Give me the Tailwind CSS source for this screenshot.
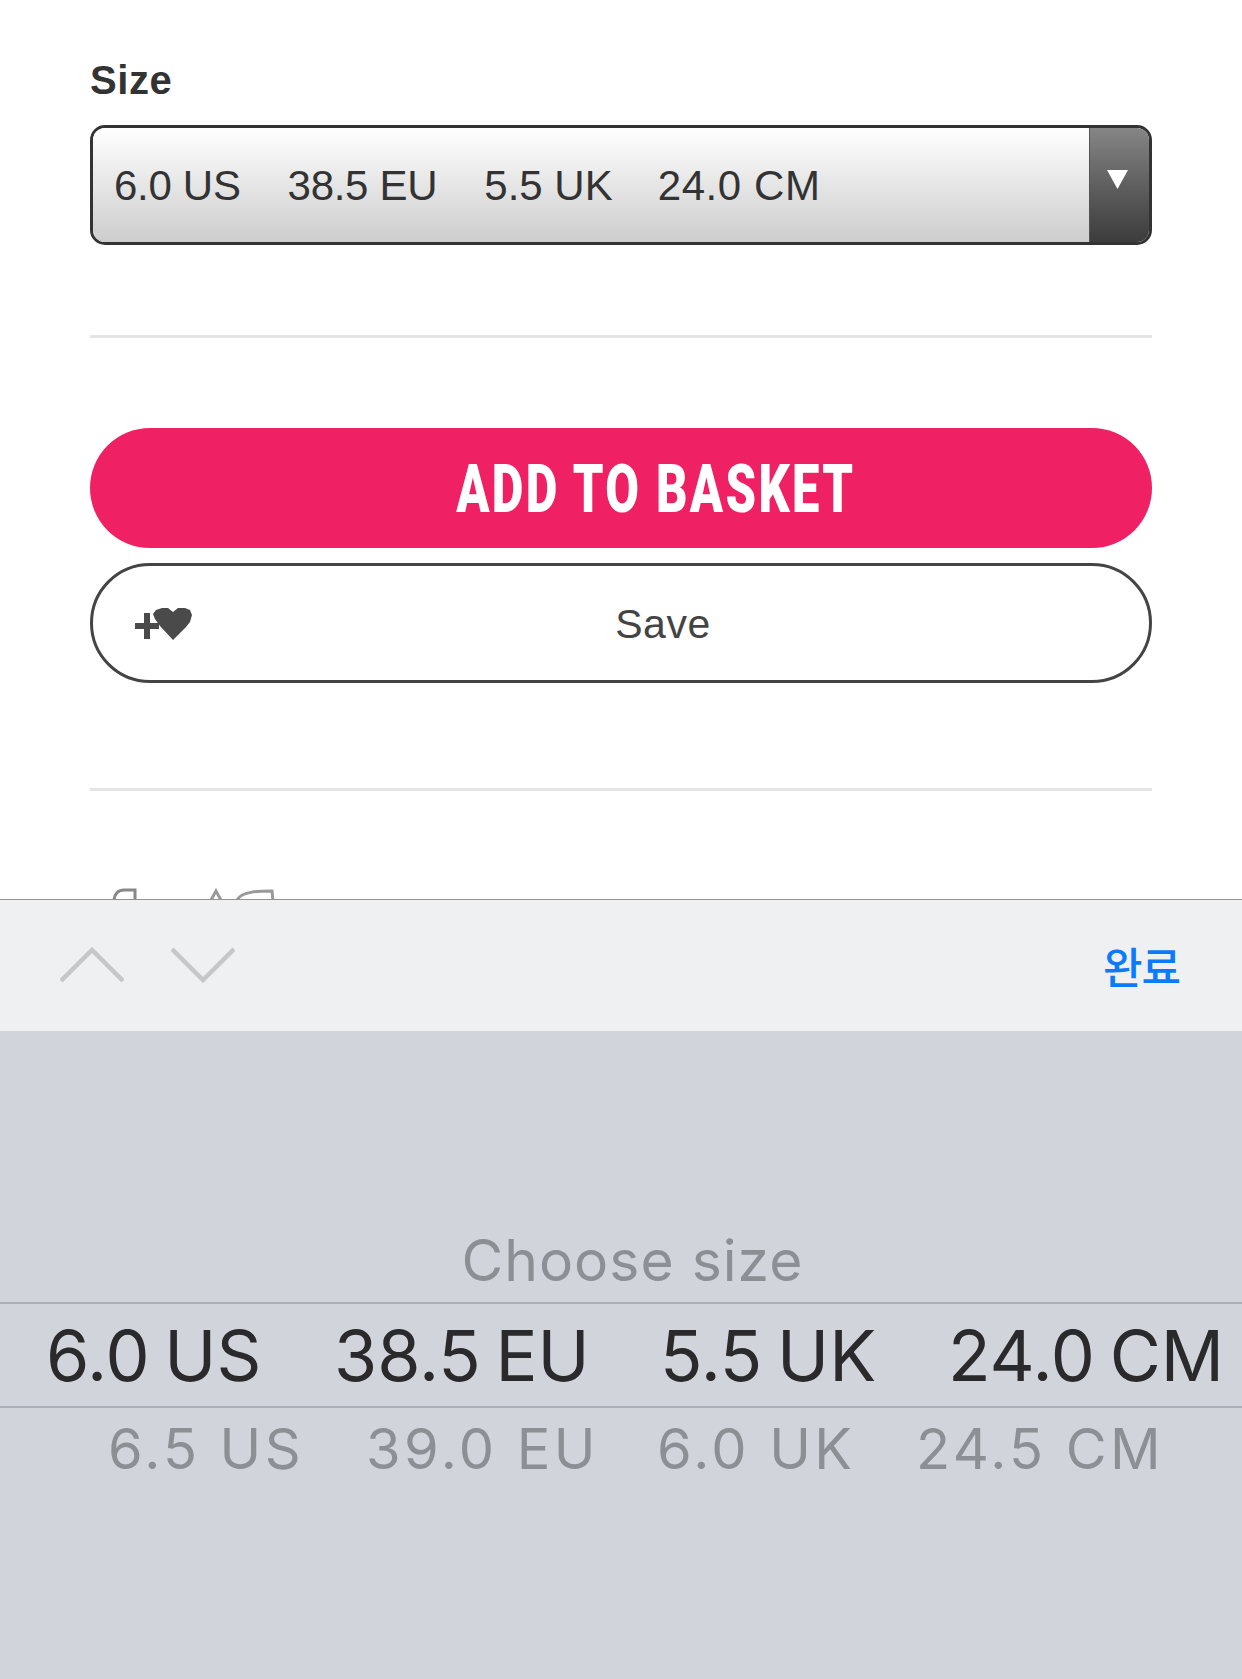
<!DOCTYPE html>
<html><head><meta charset="utf-8"><script src="https://cdn.jsdelivr.net/npm/@tailwindcss/browser@4"></script></head>
<body class="bg-white">
<div class="w-[1242px] h-[1679px] flex flex-col overflow-hidden font-['Liberation_Sans','Noto_Sans_CJK_KR',sans-serif]">
  <main class="h-[899px] shrink-0 overflow-hidden px-[90px] pt-[56px] bg-white">
    <div class="text-[40px] leading-[48px] font-bold text-[#333] tracking-[0.6px] h-[69px]">Size</div>
    <div class="h-[120px] border-[3px] border-[#333] rounded-[15px] flex overflow-hidden">
      <div class="flex-1 flex items-center pl-[21px] gap-[47px] text-[#333] text-[42px] tracking-[-0.3px] bg-linear-to-b from-white to-[#cdcdcd]">
        <span>6.0 US</span><span>38.5 EU</span><span class="tracking-[0px]">5.5 UK</span><span class="tracking-[0.6px] -ml-[2px]">24.0 CM</span>
      </div>
      <div class="w-[60px] flex items-start justify-center pt-[42px] pr-[4px] border-l border-[#555] bg-linear-to-b from-[#868686] to-[#3c3c3c]">
        <svg width="21" height="19" viewBox="0 0 21 19"><path d="M0 0H21L10.5 19Z" fill="#fff"/></svg>
      </div>
    </div>
    <div class="h-[3px] bg-[#e5e5e5] mt-[90px]"></div>
    <div class="mt-[90px] h-[120px] rounded-full bg-[#ef2063] flex items-center justify-center pl-[69px] pt-[2px]">
      <span class="text-white text-[66px] font-black font-['Roboto',sans-serif] tracking-[3.2px] scale-x-[0.74] whitespace-nowrap">ADD TO BASKET</span>
    </div>
    <div class="mt-[15px] h-[120px] rounded-full border-[3px] border-[#444] relative flex items-center justify-center pl-[84px] pt-[3px]">
      <svg class="absolute left-[42px] top-[42px] blur-[0.5px]" width="60" height="34" viewBox="0 0 60 34">
        <path d="M9 5h6v10h9v6h-9v10H9V21H0v-6h9Z" fill="#4a4a4a"/>
        <path d="M38 32 L25 18 L20 11 L18 6 L21 2 L27 0 L33 0 L38 4 L43 0 L50 0 L55 2 L57 7 L55 14 L51 19Z" fill="#4a4a4a"/>
      </svg>
      <span class="text-[41px] text-[#444] tracking-[0.5px]">Save</span>
    </div>
    <div class="h-[3px] bg-[#e5e5e5] mt-[105px]"></div>
    <div class="mt-[97px] ml-[20px] flex gap-[70px] items-start">
      <svg width="30" height="30" viewBox="0 0 30 30" fill="none" stroke="#888" stroke-width="3"><path d="M4 14C4 5 9 2 14 2h11v28"/></svg>
      <svg width="70" height="30" viewBox="0 0 70 30" fill="none" stroke="#999" stroke-width="3"><path d="M0 14L6 3l6 11M27 12C32 3 50 3 62 3l1 10"/></svg>
    </div>
  </main>
  <div class="h-[132px] shrink-0 border-t-[1px] border-[#939393] bg-[#eff0f2] flex items-center pl-[60px] pr-[62px] pb-[1px]">
    <svg width="64" height="36" viewBox="0 0 64 36" fill="none" stroke="#c6c7c9" stroke-width="4.5"><path d="M1 34L32 3L63 34"/></svg>
    <svg class="ml-[47px]" width="64" height="36" viewBox="0 0 64 36" fill="none" stroke="#c6c7c9" stroke-width="4.5"><path d="M1 2L32 33L63 2"/></svg>
    <span class="ml-auto text-[43px] leading-[48px] text-[#0b7bfb] font-medium font-['Noto_Sans_CJK_KR',sans-serif] tracking-[-1px]">완료</span>
  </div>
  <div class="flex-1 bg-[#d1d4db] flex flex-col pt-[188px] font-['Inter',sans-serif]">
    <div class="h-[83px] text-center text-[57px] leading-[84px] text-[#8c8f94] pl-[23px] tracking-[1px]">Choose size</div>
    <div class="h-[106px] border-y-2 border-[#abaeb6] flex items-center pl-[46px] text-[70px] text-[#2a2a2d] whitespace-nowrap [word-spacing:-5px]">
      <span class="w-[288px]">6.0 US</span><span class="w-[326px]">38.5 EU</span><span class="w-[288px]">5.5 UK</span><span>24.0 CM</span>
    </div>
    <div class="h-[82px] flex items-center pl-[108px] text-[56px] text-[#8c8f94] whitespace-nowrap tracking-[3.4px]">
      <span class="w-[258px]">6.5 US</span><span class="w-[291px]">39.0 EU</span><span class="w-[259px]">6.0 UK</span><span>24.5 CM</span>
    </div>
  </div>
</div>
</body></html>
